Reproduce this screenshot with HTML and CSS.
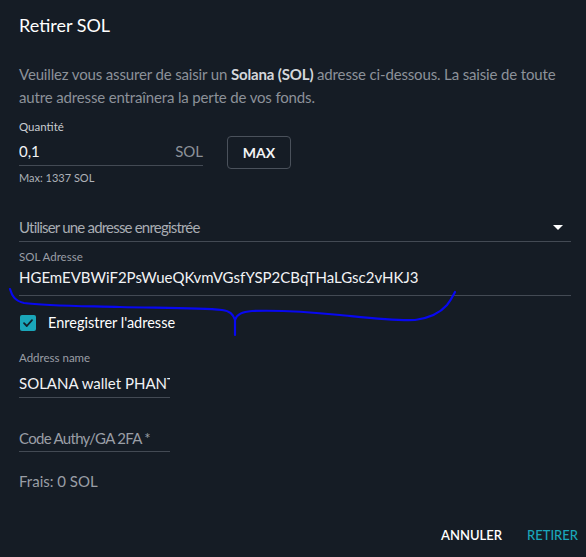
FILE: index.html
```html
<!DOCTYPE html>
<html>
<head>
  <title>Retirer SOL</title>
  <link rel="stylesheet" href="styles.css">
</head>
<body>
  <div class="dialog">
    <div class="title">Retirer SOL</div>

    <p class="intro">
      Veuillez vous assurer de saisir un <b>Solana (SOL)</b> adresse ci-dessous. La saisie de toute autre adresse entraînera la perte de vos fonds.
    </p>

    <div class="qty-row">
      <div class="qty-field">
        <div class="label label-light">Quantité</div>
        <div class="input-line">
          <input class="input" type="text" value="0,1">
          <span class="suffix">SOL</span>
        </div>
        <div class="hint">Max: 1337 SOL</div>
      </div>
      <button class="max-button">MAX</button>
    </div>

    <div class="select">
      <span class="select-text">Utiliser une adresse enregistrée</span>
      <span class="caret"></span>
    </div>

    <div class="label address-label">SOL Adresse</div>
    <div class="input-line address-line">
      <input class="input" type="text" value="HGEmEVBWiF2PsWueQKvmVGsfYSP2CBqTHaLGsc2vHKJ3">
    </div>

    <div class="check-row">
      <span class="checkbox">
        <svg width="16" height="16" viewBox="0 0 16 16">
          <path d="M4 8.2 L6.8 11 L12 5.2" fill="none" stroke="#13202a" stroke-width="1.8" stroke-linecap="round" stroke-linejoin="round"/>
        </svg>
      </span>
      <span class="check-text">Enregistrer l'adresse</span>
    </div>

    <div class="label name-label">Address name</div>
    <div class="input-line short-line">
      <input class="input" type="text" value="SOLANA wallet PHANTOM">
    </div>

    <div class="input-line short-line code-line">
      <input class="input" type="text" placeholder="Code Authy/GA 2FA *">
    </div>

    <div class="fees">Frais: 0 SOL</div>

    <div class="actions">
      <button class="action">ANNULER</button>
      <button class="action action-primary">RETIRER</button>
    </div>
  </div>

  <svg class="scribble" width="586" height="557" viewBox="0 0 586 557">
    <path d="M10 289 C12 296 15 301 24 303 C45 306 80 306 120 307 C160 308 200 308 222 310 C230 311 233 314 235 320 L235 335 M235 320 C237 314 242 312 252 311 C280 310 310 312 340 315 C370 318 395 321 415 320 C430 318 440 313 447 305 C451 300 453 296 455 292"
          fill="none" stroke="#0808f0" stroke-width="2.2" stroke-linecap="round" stroke-linejoin="round"/>
  </svg>
</body>
</html>
```

FILE: styles.css
```css
body {
  margin: 0;
  width: 586px;
  height: 557px;
  background-color: #151c25;
  font-family: Lato, 'Noto Sans', sans-serif;
  color: #eef0f2;
  overflow: hidden;
  position: relative;
}

.dialog {
  padding: 12px 15px 0 19px;
}

.title {
  font-size: 18px;
  line-height: 26px;
  color: #ffffff;
}

.intro {
  margin: 25px 0 0;
  font-size: 15px;
  line-height: 23px;
  letter-spacing: -0.15px;
  color: #8c9199;
}

.intro b {
  color: #d4d7db;
  font-weight: 700;
}

.qty-row {
  display: flex;
  align-items: flex-start;
  margin-top: 10px;
}

.qty-field {
  width: 184px;
}

.label {
  font-size: 11.5px;
  line-height: 16px;
  color: #9a9ea5;
}

.label-light {
  color: #c9ccd1;
}

.input-line {
  display: flex;
  align-items: center;
  border-bottom: 1px solid #434a54;
  padding-bottom: 2px;
  margin-top: 4px;
}

.input {
  flex: 1;
  min-width: 0;
  height: 24px;
  padding: 0;
  margin: 0;
  border: none;
  outline: none;
  background: transparent;
  font-family: Lato, 'Noto Sans', sans-serif;
  font-size: 15px;
  color: #f2f3f5;
}

.input::placeholder {
  color: #9a9ea5;
  opacity: 1;
  letter-spacing: -0.7px;
}

.suffix {
  font-size: 15px;
  color: #8c9199;
}

.hint {
  margin-top: 4px;
  font-size: 11px;
  line-height: 16px;
  color: #aeb2b8;
}

.max-button {
  margin: 17px 0 0 24px;
  width: 64px;
  height: 33px;
  background: transparent;
  border: 1px solid #4a515b;
  border-radius: 4px;
  font-family: Lato, 'Noto Sans', sans-serif;
  font-size: 14px;
  font-weight: 700;
  color: #f2f3f5;
  padding: 0;
}

.select {
  display: flex;
  align-items: center;
  justify-content: space-between;
  margin-top: 29px;
  height: 24px;
  padding-bottom: 2px;
  border-bottom: 1px solid #434a54;
  color: #a9adb3;
}

.select-text {
  font-size: 15px;
  letter-spacing: -0.8px;
}

.caret {
  width: 0;
  height: 0;
  margin-right: 8px;
  border-left: 5px solid transparent;
  border-right: 5px solid transparent;
  border-top: 5px solid #ffffff;
}

.address-label {
  margin-top: 7px;
}

.address-line {
  margin-top: 0;
  padding-bottom: 6px;
}

.check-row {
  display: flex;
  align-items: center;
  gap: 12px;
  margin-top: 19px;
  padding-left: 1px;
}

.checkbox {
  width: 16px;
  height: 16px;
  border-radius: 2px;
  background-color: #1aa6ba;
  display: flex;
}

.check-text {
  font-size: 14.5px;
  line-height: 16px;
  color: #ffffff;
}

.name-label {
  margin-top: 19px;
}

.short-line {
  width: 151px;
  margin-top: 5px;
}

.code-line {
  margin-top: 28px;
  padding-bottom: 1px;
}

.fees {
  margin-top: 17px;
  font-size: 15px;
  line-height: 24px;
  color: #9a9ea5;
}

.actions {
  display: flex;
  justify-content: flex-end;
  gap: 25px;
  margin: 32px -7px 0 0;
}

.action {
  background: transparent;
  border: none;
  padding: 0;
  font-family: Lato, 'Noto Sans', sans-serif;
  font-size: 13px;
  line-height: 20px;
  font-weight: 600;
  color: #ffffff;
}

.action-primary {
  color: #1aa6ba;
  font-weight: 500;
}

/* annotation drawn over the form */
.scribble {
  position: absolute;
  top: 0;
  left: 0;
  pointer-events: none;
}
```
